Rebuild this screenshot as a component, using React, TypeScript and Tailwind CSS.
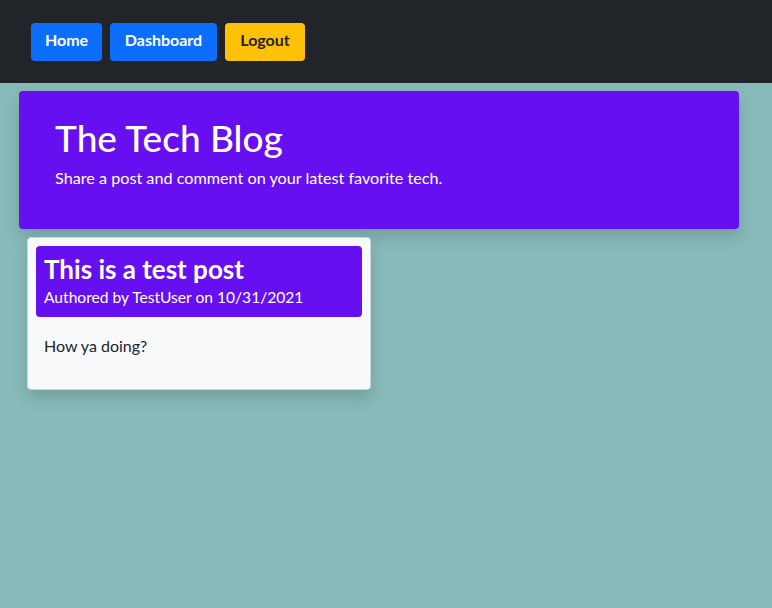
import React from "react";

export default function App() {
  const font = { fontFamily: 'Lato, "Noto Sans", sans-serif' };
  return (
    <div className="min-h-[608px] bg-[#88baba]" style={font}>
      <nav className="h-[83px] bg-[#212529] flex items-center pl-[31px] gap-2">
        <button className="h-[38px] w-[71px] pb-[3px] rounded-[4px] bg-[#0d6efd] text-white font-bold text-[16px]">Home</button>
        <button className="h-[38px] w-[107px] pb-[3px] rounded-[4px] bg-[#0d6efd] text-white font-bold text-[16px]">Dashboard</button>
        <button className="h-[38px] w-[80px] pb-[3px] rounded-[4px] bg-[#ffc107] text-[#212529] font-bold text-[16px]">Logout</button>
      </nav>
      <div className="pt-2 pl-[19px]">
        <div className="w-[720px] h-[138px] bg-[#6610f2] rounded-[4px] shadow-[0_8px_16px_rgba(0,0,0,0.15)] pl-[36px] pt-[25px] text-white">
          <h1 className="text-[37px] font-medium leading-[1.2] mb-[6px]">The Tech Blog</h1>
          <p className="text-[16.2px] leading-[1.5]">Share a post and comment on your latest favorite tech.</p>
        </div>
        <div className="ml-2 mt-2 w-[344px] h-[153px] bg-[#f8f9fa] rounded-[4px] border border-[#d0d4d8] shadow-[0_8px_16px_rgba(0,0,0,0.15)] p-2">
          <div className="bg-[#6610f2] rounded-[4px] h-[71px] px-2 pt-[9px] text-white">
            <h3 className="text-[26px] font-bold leading-[1.15]">This is a test post</h3>
            <p className="text-[15.6px] leading-[1.4] mt-[2px]">Authored by TestUser on 10/31/2021</p>
          </div>
          <p className="px-2 pt-[17px] text-[16px] text-[#212529]">How ya doing?</p>
        </div>
      </div>
    </div>
  );
}
